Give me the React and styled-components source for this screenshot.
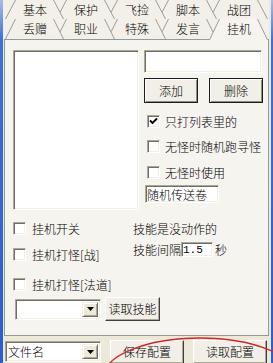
import React from 'react';
import styled, { createGlobalStyle, css } from 'styled-components';

const PANEL = '#F6F4EE';
const TABFILL = '#F2F0E8';
const TABLINE = '#9A9C9C';

const GlobalStyle = createGlobalStyle`
  html, body { margin: 0; padding: 0; background: #ECE9D8; }
  * { box-sizing: border-box; }
`;

const sunken = css`
  background: #FFFFFF;
  border: 1px solid;
  border-color: #ACA899 #FFFFFF #FFFFFF #ACA899;
  box-shadow: inset 1px 1px #716F64, inset -1px -1px #F1EFE2;
`;

const Window = styled.div`
  position: relative;
  width: 273px;
  height: 363px;
  overflow: hidden;
  display: flex;
  background: #ECE9D8;
  font-family: "SimSun", "Noto Sans CJK SC", sans-serif;
  font-size: 12px;
  font-weight: 300;
  line-height: 14px;
  color: #000;
`;

const FrameEdge = styled.div`
  flex: none;
  width: ${p => p.$w}px;
  background: linear-gradient(#A8BBE4 0, #3E70D8 40px, #2A5CD2 100%);
`;

const Body = styled.div`
  flex: 1;
  display: flex;
  flex-direction: column;
  padding: 0 2px 0 1px;
  min-width: 0;
`;

const TabArea = styled.div`
  position: relative;
  z-index: 2;
  display: flex;
  flex-direction: column;
  background: ${TABFILL};
  margin-left: -1px;
  padding-left: 1px;
`;

const TabRow = styled.div`
  display: flex;
  height: ${p => p.$h}px;
  padding-left: 1px;
`;

const TabItem = styled.div`
  position: relative;
  flex: none;
  width: 59px;
  margin-left: -8px;
  z-index: ${p => p.$z};
  display: flex;
  align-items: center;
  justify-content: center;
  &:first-child { margin-left: 0; }
`;

const TabShape = styled.svg`
  position: absolute;
  left: 0;
  top: 0;
  overflow: visible;
`;

const TabLabel = styled.span`
  position: relative;
  padding-left: 1px;
`;

const Panel = styled.div`
  position: relative;
  z-index: 1;
  display: flex;
  flex-direction: column;
  background: ${PANEL};
  border: 1px solid #919B9C;
  padding: 10px 5px 14px 8px;
`;

const TopSection = styled.div`
  display: flex;
  gap: 5px;
`;

const ListBox = styled.div`
  ${sunken};
  width: 126px;
  height: 160px;
`;

const SideColumn = styled.div`
  display: flex;
  flex-direction: column;
  align-items: flex-start;
  width: 119px;
`;

const Field = styled.input`
  ${sunken};
  width: ${p => p.$w}px;
  height: ${p => p.$h}px;
  margin: ${p => p.$mt || 0}px 0 0 ${p => p.$ml || 0}px;
  padding: 0 0 0 1px;
  font: inherit;
  font-family: ${p => (p.$mono ? '"Liberation Mono", monospace' : 'inherit')};
  font-size: ${p => (p.$mono ? '11px' : '12px')};
  color: #000;
  outline: none;
`;

const ButtonRow = styled.div`
  display: flex;
  justify-content: space-between;
  width: 100%;
  margin-top: 5px;
`;

const Button = styled.button`
  flex: none;
  width: ${p => p.$w}px;
  height: ${p => p.$h}px;
  margin: 0;
  padding: 0;
  font: inherit;
  color: #000;
  background: #F1EFE7;
  border: 1px solid;
  border-color: ${p => (p.$framed ? '#1C1C1C' : '#FFFFFF #404040 #404040 #FFFFFF')};
  box-shadow: ${p => (p.$framed
    ? 'inset 1px 1px #FFFFFF, inset -1px -1px #8E8B80'
    : 'inset -1px -1px #ACA899')};
  display: flex;
  align-items: center;
  justify-content: center;
`;

const CheckRow = styled.label`
  display: flex;
  align-items: center;
  gap: ${p => p.$gap || 5}px;
  height: 13px;
  margin: ${p => p.$mt || 0}px 0 0 ${p => p.$ml || 0}px;
  white-space: nowrap;
`;

const Box = styled.span`
  ${sunken};
  flex: none;
  width: 13px;
  height: 13px;
  display: flex;
  align-items: center;
  justify-content: center;
`;

function CheckBox({ checked }) {
  return (
    <Box>
      {checked && (
        <svg width="9" height="9" viewBox="0 0 9 9">
          <path d="M1 3.5 L3.5 6 L8 1.5" fill="none" stroke="#000" strokeWidth="1.9" />
        </svg>
      )}
    </Box>
  );
}

const LowerSection = styled.div`
  display: flex;
  margin-top: 12px;
`;

const CheckList = styled.div`
  display: flex;
  flex-direction: column;
  width: 120px;
`;

const SkillInfo = styled.div`
  display: flex;
  flex-direction: column;
`;

const SkillLine = styled.div`
  display: flex;
  align-items: center;
  height: ${p => p.$h || 14}px;
  margin-top: ${p => p.$mt || 0}px;
  white-space: nowrap;
`;

const Unit = styled.span`
  margin-left: 2px;
`;

const ComboRow = styled.div`
  display: flex;
  align-items: center;
  gap: 4px;
  margin-top: 6px;
  padding-left: 2px;
`;

const ComboBox = styled.div`
  ${sunken};
  flex: none;
  width: ${p => p.$w}px;
  height: ${p => p.$h}px;
  margin-top: ${p => p.$mt || 0}px;
  display: flex;
  align-items: stretch;
  padding: 2px;
`;

const ComboText = styled.span`
  flex: 1;
  display: flex;
  align-items: center;
  white-space: nowrap;
`;

const DropButton = styled.span`
  flex: none;
  width: 16px;
  background: #ECE9D8;
  border: 1px solid;
  border-color: #F1EFE2 #716F64 #716F64 #F1EFE2;
  box-shadow: inset 1px 1px #FFFFFF, inset -1px -1px #ACA899;
  display: flex;
  align-items: center;
  justify-content: center;
`;

function Combo({ w, h, text, mt }) {
  return (
    <ComboBox $w={w} $h={h} $mt={mt}>
      <ComboText>{text}</ComboText>
      <DropButton>
        <svg width="7" height="4" viewBox="0 0 7 4">
          <path d="M0 0 H7 L3.5 4 Z" fill="#000" />
        </svg>
      </DropButton>
    </ComboBox>
  );
}

const BottomBar = styled.div`
  display: flex;
  align-items: flex-start;
  gap: 9px;
  margin-top: 4px;
  padding-left: 1px;
`;

const Annotation = styled.svg`
  position: absolute;
  left: 0;
  top: 0;
  pointer-events: none;
`;

const tabsRow1 = ['基本', '保护', '飞捡', '脚本', '战团'];
const tabsRow2 = ['丢赠', '职业', '特殊', '发言', '挂机'];

function Tab({ label, index, height, selected }) {
  const H = height + (selected ? 1 : 0);
  return (
    <TabItem $z={selected ? 10 : 5 - index}>
      <TabShape width="59" height={H} viewBox={`0 0 59 ${H}`}>
        <polygon points={`0,${H} 10,0 49,0 59,${H}`} fill={selected ? PANEL : TABFILL} />
        <line x1="0.5" y1={H} x2="10.5" y2="0" stroke={TABLINE} strokeWidth="1" />
        <line x1="48.5" y1="0" x2="58.5" y2={H} stroke={TABLINE} strokeWidth="1" />
      </TabShape>
      <TabLabel>{label}</TabLabel>
    </TabItem>
  );
}

export default function App() {
  return (
    <>
      <GlobalStyle />
      <Window>
        <FrameEdge $w={3} />
        <Body>
          <TabArea>
            <TabRow $h={19}>
              {tabsRow1.map((t, i) => (
                <Tab key={t} label={t} index={i} height={19} />
              ))}
            </TabRow>
            <TabRow $h={20}>
              {tabsRow2.map((t, i) => (
                <Tab key={t} label={t} index={i} height={20} selected={t === '挂机'} />
              ))}
            </TabRow>
          </TabArea>
          <Panel>
            <TopSection>
              <ListBox />
              <SideColumn>
                <Field $w={118} $h={23} readOnly value="" />
                <ButtonRow>
                  <Button $framed $w={54} $h={25}>添加</Button>
                  <Button $framed $w={54} $h={25}>删除</Button>
                </ButtonRow>
                <CheckRow $mt={12} $ml={3}><CheckBox checked />只打列表里的</CheckRow>
                <CheckRow $mt={12} $ml={3}><CheckBox />无怪时随机跑寻怪</CheckRow>
                <CheckRow $mt={13} $ml={3}><CheckBox />无怪时使用</CheckRow>
                <Field $w={74} $h={18} $mt={6} $ml={1} readOnly value="随机传送卷" />
              </SideColumn>
            </TopSection>
            <LowerSection>
              <CheckList>
                <CheckRow $gap={6}><CheckBox />挂机开关</CheckRow>
                <CheckRow $gap={6} $mt={13}><CheckBox />挂机打怪[战]</CheckRow>
                <CheckRow $gap={6} $mt={17}><CheckBox />挂机打怪[法道]</CheckRow>
              </CheckList>
              <SkillInfo>
                <SkillLine>技能是没动作的</SkillLine>
                <SkillLine $mt={6} $h={15}>
                  技能间隔
                  <Field $w={32} $h={15} $mono readOnly value="1.5" />
                  <Unit>秒</Unit>
                </SkillLine>
              </SkillInfo>
            </LowerSection>
            <ComboRow>
              <Combo w={86} h={21} text="" />
              <Button $w={55} $h={24}>读取技能</Button>
            </ComboRow>
          </Panel>
          <BottomBar>
            <Combo w={96} h={21} mt={1} text="文件名" />
            <Button $w={74} $h={24}>保存配置</Button>
            <Button $w={74} $h={24}>读取配置</Button>
          </BottomBar>
        </Body>
        <FrameEdge $w={2} />
        <Annotation width="273" height="363" viewBox="0 0 273 363">
          <ellipse cx="200" cy="378" rx="97" ry="40" fill="none" stroke="#D02828" strokeWidth="1.3" />
        </Annotation>
      </Window>
    </>
  );
}
